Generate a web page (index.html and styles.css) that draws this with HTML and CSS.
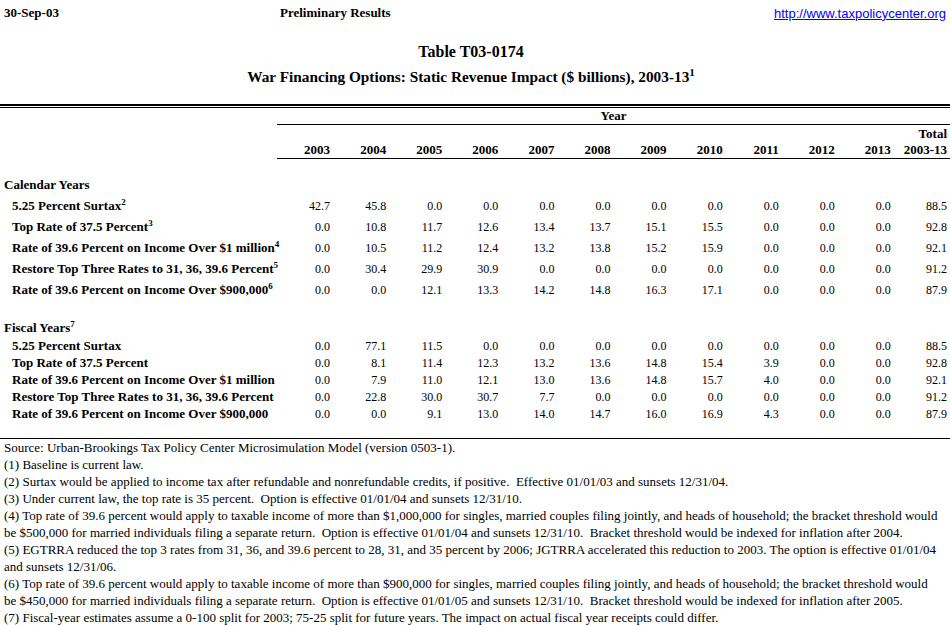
FILE: index.html
```html
<!DOCTYPE html>
<html>
<head>
<meta charset="utf-8">
<title>Table T03-0174</title>
<link rel="stylesheet" href="styles.css">
</head>
<body>
<div class="page">
  <div class="topbar">
    <div class="date">30-Sep-03</div>
    <div class="prelim">Preliminary Results</div>
    <a class="site" href="#">http://www.taxpolicycenter.org</a>
  </div>
  <div class="titles">
    <div class="t1">Table T03-0174</div>
    <div class="t2">War Financing Options: Static Revenue Impact ($ billions), 2003-13<sup>1</sup></div>
  </div>
  <div class="dbl"></div>
  <table class="data">
    <colgroup><col class="c-label"><col span="12"></colgroup>
    <thead>
      <tr class="r-year"><th></th><th colspan="12" class="year ul">Year</th></tr>
      <tr class="r-total"><th></th><th colspan="11"></th><th class="num">Total</th></tr>
      <tr class="r-years"><th></th><th class="num ul">2003</th><th class="num ul">2004</th><th class="num ul">2005</th><th class="num ul">2006</th><th class="num ul">2007</th><th class="num ul">2008</th><th class="num ul">2009</th><th class="num ul">2010</th><th class="num ul">2011</th><th class="num ul">2012</th><th class="num ul">2013</th><th class="num ul">2003-13</th></tr>
    </thead>
    <tbody class="cal">
      <tr class="gap1"><td colspan="13"></td></tr>
      <tr class="sect"><td class="sect-l" colspan="13">Calendar Years</td></tr>
      <tr><td class="lab">5.25 Percent Surtax<sup>2</sup></td><td>42.7</td><td>45.8</td><td>0.0</td><td>0.0</td><td>0.0</td><td>0.0</td><td>0.0</td><td>0.0</td><td>0.0</td><td>0.0</td><td>0.0</td><td>88.5</td></tr>
      <tr><td class="lab">Top Rate of 37.5 Percent<sup>3</sup></td><td>0.0</td><td>10.8</td><td>11.7</td><td>12.6</td><td>13.4</td><td>13.7</td><td>15.1</td><td>15.5</td><td>0.0</td><td>0.0</td><td>0.0</td><td>92.8</td></tr>
      <tr><td class="lab">Rate of 39.6 Percent on Income Over $1 million<sup>4</sup></td><td>0.0</td><td>10.5</td><td>11.2</td><td>12.4</td><td>13.2</td><td>13.8</td><td>15.2</td><td>15.9</td><td>0.0</td><td>0.0</td><td>0.0</td><td>92.1</td></tr>
      <tr><td class="lab">Restore Top Three Rates to 31, 36, 39.6 Percent<sup>5</sup></td><td>0.0</td><td>30.4</td><td>29.9</td><td>30.9</td><td>0.0</td><td>0.0</td><td>0.0</td><td>0.0</td><td>0.0</td><td>0.0</td><td>0.0</td><td>91.2</td></tr>
      <tr><td class="lab">Rate of 39.6 Percent on Income Over $900,000<sup>6</sup></td><td>0.0</td><td>0.0</td><td>12.1</td><td>13.3</td><td>14.2</td><td>14.8</td><td>16.3</td><td>17.1</td><td>0.0</td><td>0.0</td><td>0.0</td><td>87.9</td></tr>
    </tbody>
    <tbody class="fis">
      <tr class="gap2"><td colspan="13"></td></tr>
      <tr class="sect"><td class="sect-l" colspan="13">Fiscal Years<sup>7</sup></td></tr>
      <tr><td class="lab">5.25 Percent Surtax</td><td>0.0</td><td>77.1</td><td>11.5</td><td>0.0</td><td>0.0</td><td>0.0</td><td>0.0</td><td>0.0</td><td>0.0</td><td>0.0</td><td>0.0</td><td>88.5</td></tr>
      <tr><td class="lab">Top Rate of 37.5 Percent</td><td>0.0</td><td>8.1</td><td>11.4</td><td>12.3</td><td>13.2</td><td>13.6</td><td>14.8</td><td>15.4</td><td>3.9</td><td>0.0</td><td>0.0</td><td>92.8</td></tr>
      <tr><td class="lab">Rate of 39.6 Percent on Income Over $1 million</td><td>0.0</td><td>7.9</td><td>11.0</td><td>12.1</td><td>13.0</td><td>13.6</td><td>14.8</td><td>15.7</td><td>4.0</td><td>0.0</td><td>0.0</td><td>92.1</td></tr>
      <tr><td class="lab">Restore Top Three Rates to 31, 36, 39.6 Percent</td><td>0.0</td><td>22.8</td><td>30.0</td><td>30.7</td><td>7.7</td><td>0.0</td><td>0.0</td><td>0.0</td><td>0.0</td><td>0.0</td><td>0.0</td><td>91.2</td></tr>
      <tr><td class="lab">Rate of 39.6 Percent on Income Over $900,000</td><td>0.0</td><td>0.0</td><td>9.1</td><td>13.0</td><td>14.0</td><td>14.7</td><td>16.0</td><td>16.9</td><td>4.3</td><td>0.0</td><td>0.0</td><td>87.9</td></tr>
      <tr class="gap3"><td colspan="13"></td></tr>
    </tbody>
  </table>
  <div class="notes">
    <div class="note">Source: Urban-Brookings Tax Policy Center Microsimulation Model (version 0503-1).</div>
    <div class="note">(1) Baseline is current law.</div>
    <div class="note">(2) Surtax would be applied to income tax after refundable and nonrefundable credits, if positive.  Effective 01/01/03 and sunsets 12/31/04.</div>
    <div class="note">(3) Under current law, the top rate is 35 percent.  Option is effective 01/01/04 and sunsets 12/31/10.</div>
    <div class="note">(4) Top rate of 39.6 percent would apply to taxable income of more than $1,000,000 for singles, married couples filing jointly, and heads of household; the bracket threshold would<br>be $500,000 for married individuals filing a separate return.  Option is effective 01/01/04 and sunsets 12/31/10.  Bracket threshold would be indexed for inflation after 2004.</div>
    <div class="note">(5) EGTRRA reduced the top 3 rates from 31, 36, and 39.6 percent to 28, 31, and 35 percent by 2006; JGTRRA accelerated this reduction to 2003. The option is effective 01/01/04<br>and sunsets 12/31/06.</div>
    <div class="note">(6) Top rate of 39.6 percent would apply to taxable income of more than $900,000 for singles, married couples filing jointly, and heads of household; the bracket threshold would<br>be $450,000 for married individuals filing a separate return.  Option is effective 01/01/05 and sunsets 12/31/10.  Bracket threshold would be indexed for inflation after 2005.</div>
    <div class="note">(7) Fiscal-year estimates assume a 0-100 split for 2003; 75-25 split for future years. The impact on actual fiscal year receipts could differ.</div>
  </div>
</div>
</body>
</html>
```

FILE: styles.css
```css
html, body {
  margin: 0;
  padding: 0;
  background: #ffffff;
  color: #000000;
}

.page {
  width: 950px;
  font-family: "Liberation Serif", "Times New Roman", serif;
}

.topbar {
  display: flex;
  align-items: center;
  height: 26px;
  font-size: 13px;
  font-weight: bold;
}

.date {
  width: 273px;
  padding-left: 4px;
}

.prelim {
  flex: 1;
  padding-left: 3px;
}

.site {
  font-family: "Liberation Sans", Arial, sans-serif;
  font-weight: normal;
  font-size: 13px;
  color: #0000ff;
  text-decoration: underline;
  padding-right: 4px;
}

.titles {
  padding-top: 16px;
  padding-right: 8px;
  text-align: center;
  font-weight: bold;
}

.t1 {
  font-size: 16px;
  height: 20px;
  line-height: 20px;
}

.t2 {
  font-size: 15.3px;
  margin-top: 5px;
  height: 20px;
  line-height: 20px;
}

.t2 sup {
  font-size: 11px;
  line-height: 0;
  vertical-align: 6px;
}

.dbl {
  margin-top: 17px;
  height: 1px;
  border-top: 2px solid #000;
  border-bottom: 1px solid #000;
}

.data {
  width: 950px;
  table-layout: fixed;
  border-collapse: separate;
  border-spacing: 0;
  font-size: 12px;
}

.c-label {
  width: 277px;
}

.data th,
.data td {
  padding: 0 3px 0 0;
  white-space: nowrap;
  overflow: visible;
  line-height: 14px;
}

.data th {
  font-size: 13px;
  font-weight: bold;
}

.data td {
  text-align: right;
}

.data .num {
  text-align: right;
}

.data .year {
  text-align: center;
  padding: 0;
}

.data .ul {
  border-bottom: 1px solid #000;
}

.r-year { height: 17px; }
.r-total { height: 17px; }
.r-years { height: 17px; }

.cal tr { height: 21px; }
.cal tr.gap1 { height: 15px; }
.fis tr { height: 17px; }
.fis tr.gap2 { height: 19px; }
.fis tr.sect { height: 18px; }
.fis tr.gap3 { height: 16px; }

.data td.sect-l {
  text-align: left;
  font-weight: bold;
  font-size: 13px;
  padding-left: 4px;
}

.data td.lab {
  text-align: left;
  font-weight: bold;
  font-size: 13px;
  padding-left: 12px;
}

.data sup {
  font-size: 9px;
  line-height: 0;
  vertical-align: 5px;
}

.notes {
  border-top: 1px solid #000;
  font-size: 13px;
  line-height: 17px;
  padding-left: 4px;
}

.note {
  white-space: pre;
}
```
